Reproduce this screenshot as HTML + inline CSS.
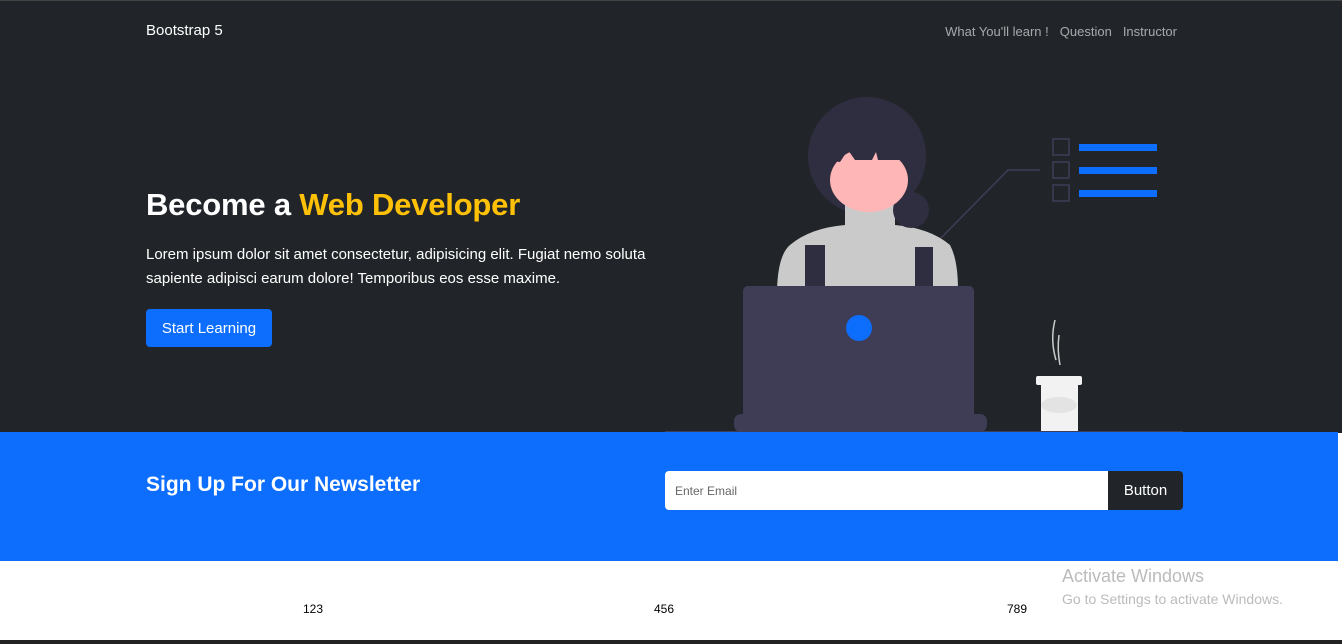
<!DOCTYPE html>
<html><head><style>
body{margin:0;width:1342px;height:644px;overflow:hidden;font-family:"Liberation Sans",sans-serif;background:#fff;position:relative}
.hero{position:absolute;left:0;top:0;width:1342px;height:432px;background:#212529;border-top:1px solid #444}
.brand{position:absolute;left:146px;top:21px;color:#fff;font-size:15px}
.nav{position:absolute;right:165px;top:23px;color:rgba(255,255,255,.6);font-size:13px}
.nav span{margin-left:11px}
h1{position:absolute;left:146px;top:186px;margin:0;color:#fff;font-size:31px;font-weight:bold;letter-spacing:-0.2px}
h1 b{color:#ffc107}
.p{position:absolute;left:146px;top:242px;color:#fff;font-size:15px;line-height:24px;width:520px}
.btn{position:absolute;left:146px;top:308px;width:126px;height:38px;background:#0d6efd;color:#fff;border-radius:4px;font-size:15px;line-height:39px;text-align:center}
.news{position:absolute;left:0;top:432px;width:1338px;height:129px;background:#0d6efd}
.news h2{position:absolute;left:146px;top:41px;margin:0;color:#fff;font-size:21px;font-weight:bold}
.inp{position:absolute;left:665px;top:39px;width:443px;height:39px;background:#fff;border-radius:4px 0 0 4px;font-size:12px;color:#666;line-height:40px;text-indent:10px}
.nb{position:absolute;left:1108px;top:39px;width:75px;height:39px;background:#212529;color:#fff;border-radius:0 4px 4px 0;font-size:15px;line-height:40px;text-align:center}
.n{position:absolute;top:602px;font-size:12px;color:#000}
.aw{position:absolute;left:1062px;top:566px;color:#bbb;font-size:18px}
.aw2{position:absolute;left:1062px;top:591px;color:#bbb;font-size:14px}
.bot{position:absolute;left:0;top:640px;width:1342px;height:4px;background:#222}
</style></head><body>
<div class="hero">
<div class="brand">Bootstrap 5</div>
<div class="nav">What You'll learn !<span>Question</span><span>Instructor</span></div>
<h1>Become a <b>Web Developer</b></h1>
<div class="p">Lorem ipsum dolor sit amet consectetur, adipisicing elit. Fugiat nemo soluta sapiente adipisci earum dolore! Temporibus eos esse maxime.</div>
<div class="btn">Start Learning</div>
<svg style="position:absolute;left:0;top:-1px" width="1342" height="432">
<circle cx="867" cy="156" r="59" fill="#2f2e41"/>
<path d="M845 205 L895 205 L895 225 Q930 228 950 245 Q958 260 958 290 L777 290 Q778 255 790 245 Q810 228 845 225Z" fill="#cacaca"/>
<rect x="805" y="245" width="20" height="45" fill="#2f2e41"/>
<rect x="915" y="247" width="18" height="43" fill="#2f2e41"/>
<circle cx="911" cy="210" r="18" fill="#2f2e41"/>
<ellipse cx="869" cy="180" rx="39" ry="32" fill="#ffb6b6"/>
<path d="M826 140 L912 140 L912 160 L878 160 L876 152 L872 160 L855 160 L848 150 L840 162 L826 160Z" fill="#2f2e41"/>
<path d="M941 238 L1008 170 L1040 170" stroke="#3f3d56" stroke-width="1.5" fill="none"/>
<g fill="none" stroke="#3f3d56" stroke-width="1.5"><rect x="1053" y="139" width="16" height="16"/><rect x="1053" y="162" width="16" height="16"/><rect x="1053" y="185" width="16" height="16"/></g>
<g fill="#0d6efd"><rect x="1079" y="144" width="78" height="7"/><rect x="1079" y="167" width="78" height="7"/><rect x="1079" y="190" width="78" height="7"/></g>
<rect x="743" y="286" width="231" height="145" rx="5" fill="#3f3d56"/>
<rect x="734" y="414" width="253" height="18" rx="7" fill="#3f3d56"/>
<circle cx="859" cy="328" r="13" fill="#0d6efd"/>
<path d="M1055 320 Q1050 340 1056 360 M1059 335 Q1057 350 1060 365" stroke="#ccc" stroke-width="1.5" fill="none"/>
<rect x="1036" y="376" width="46" height="9" rx="2" fill="#f2f2f2"/>
<rect x="1041" y="385" width="37" height="47" fill="#f2f2f2"/>
<ellipse cx="1059" cy="405" rx="18" ry="8" fill="#e3e3e3"/>
<rect x="665" y="431" width="518" height="1" fill="#3f3d56"/>
</svg>
</div>
<div class="news"><h2>Sign Up For Our Newsletter</h2><div class="inp">Enter Email</div><div class="nb">Button</div></div>
<div class="n" style="left:303px">123</div><div class="n" style="left:654px">456</div><div class="n" style="left:1007px">789</div>
<div class="aw">Activate Windows</div><div class="aw2">Go to Settings to activate Windows.</div>
<div class="bot"></div>
</body></html>
